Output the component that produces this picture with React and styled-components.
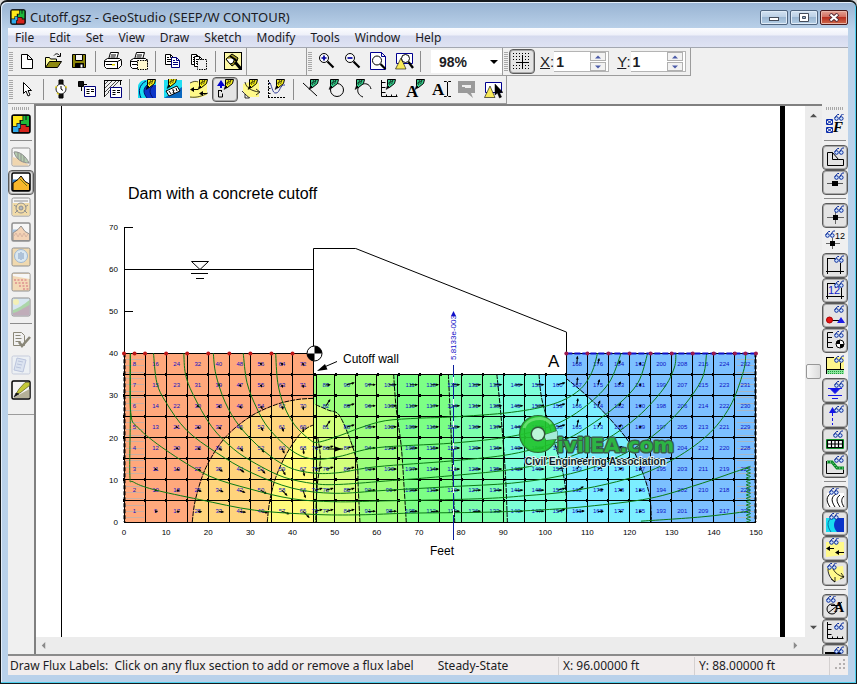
import React, { useState } from 'react';
import styled, { createGlobalStyle, css } from 'styled-components';

const GlobalStyle = createGlobalStyle`
  * { box-sizing: border-box; }

  body {
    margin: 0;
    background: #d8d8d8;
    color: #1c1c24;
    font-family: 'Noto Sans', 'Open Sans', sans-serif;
    font-size: 12px;
  }

  button, input, select {
    font: inherit;
    color: inherit;
    margin: 0;
    padding: 0;
    border: 0;
    border-radius: 0;
    outline: 0;
  }
`;

/* ---------- window ---------- */

const Window = styled.div`
  display: flex;
  flex-direction: column;
  height: 100vh;
  padding: 0 8px 8px 7px;
  background: linear-gradient(#98b3d2, #bbd2ea 28px, #b9d1ea);
  border: 1px solid #16191c;
  border-top-width: 2px;
  border-radius: 7px 7px 0 0;
  box-shadow: inset -1px -1px 0 #4fd0ee, inset 1px 1px 0 #e4eefa;
`;

const TitleBar = styled.header`
  display: flex;
  align-items: center;
  gap: 4px;
  flex: 0 0 26px;
  padding: 4px 0 0 2px;
`;

const Title = styled.h1`
  flex: 1;
  margin: 0;
  font-size: 13px;
  font-weight: 400;
  white-space: nowrap;
`;

const Captions = styled.div`
  display: flex;
  gap: 2px;
`;

const CaptionButton = styled.button`
  display: flex;
  align-items: center;
  justify-content: center;
  width: 28px;
  height: 15px;
  border: 1px solid #50657f;
  border-radius: 2px;
  background: linear-gradient(#d3e2f1, #b9cee4 50%, #9bb6d1 50%, #b4cfe6);
  box-shadow: inset 0 0 0 1px #dfebf7;

  ${p => p.$close && css`
    border-color: #4a1a1c;
    background: linear-gradient(#e3a294, #d2695a 50%, #b83020 50%, #cf6a4c);
    box-shadow: inset 0 0 0 1px #e9b5a8;
  `}
`;

const Client = styled.div`
  display: flex;
  flex-direction: column;
  flex: 1;
  min-height: 0;
  background: #f0f0f0;
`;

const MenuBar = styled.nav`
  display: flex;
  flex: 0 0 20px;
  border-bottom: 1px solid #a3a7b0;
  background: linear-gradient(#fbfcfe, #eef0f9 7px, #d5daee 8px, #dfe3f3);
`;

const MenuItem = styled.button`
  margin-right: 1px;
  padding: 0 7px;
  background: none;
  font-size: 12px;
  line-height: 18px;
`;

/* ---------- tool bars ---------- */

const ToolRow = styled.div`
  display: flex;
  flex: 0 0 28px;
`;

const ToolBar = styled.div`
  display: flex;
  align-items: center;
  padding-right: ${p => p.$end || 0}px;
  border-right: 1px solid #9c9c9c;
  border-bottom: 1px solid #9c9c9c;
`;

const Blank = styled.div`
  flex: 0 0 60px;
  border-right: 1px solid #9c9c9c;
  border-bottom: 1px solid #9c9c9c;
`;

const Grip = styled.div`
  flex: none;
  width: 4px;
  height: 19px;
  margin: 0 1px;
  background: repeating-linear-gradient(#a8a8a8 0 1px, #f0f0f0 1px 2px);

  ${p => p.$across && css`
    width: 18px;
    height: 3px;
    margin: 2px 0;
    background: repeating-linear-gradient(90deg, #a8a8a8 0 1px, #f0f0f0 1px 2px);
  `}
`;

const Separator = styled.div`
  flex: none;
  width: 1px;
  height: 21px;
  margin: 0 4px 0 3px;
  background: #8c8c8c;

  ${p => p.$across && css`
    width: 22px;
    height: 1px;
    margin: 3px 0 4px;
  `}
`;

const ToolButton = styled.button`
  display: flex;
  align-items: flex-start;
  justify-content: center;
  flex: none;
  width: 26px;
  height: 25px;
  padding-top: 1px;
  background: none;
  border: 1px solid transparent;
  border-radius: 4px;
  opacity: ${p => (p.$dim ? 0.4 : 1)};

  ${p => p.$on && css`
    border-color: #5a5a5a;
    background: #e4e4e4;
    box-shadow: inset 0 0 0 1px #a9a9a9;
  `}
`;

const ZoomBox = styled.div`
  display: flex;
  align-items: center;
  width: 71px;
  height: 23px;
  margin-left: 6px;
  padding-right: 4px;
  background: #ffffff;
`;

const ZoomSelect = styled.select`
  flex: 1;
  height: 21px;
  padding-left: 8px;
  appearance: none;
  background: none;
  font: bold 14px 'Liberation Sans', Arial, sans-serif;
`;

const Coord = styled.div`
  display: flex;
  align-items: center;
  margin-left: 5px;
  margin-right: 3px;
  font: 15px 'Liberation Sans', Arial, sans-serif;
`;

const CoordBox = styled.div`
  display: flex;
  align-items: center;
  height: 21px;
  padding-right: 2px;
  background: #ffffff;
  border: 1px solid #b4b4b4;
  border-left: 0;

  input {
    width: 36px;
    padding-left: 2px;
    background: none;
    font: bold 14px 'Liberation Sans', Arial, sans-serif;
  }
`;

const Spinner = styled.div`
  display: flex;
  flex-direction: column;
  gap: 1px;

  button {
    display: flex;
    align-items: center;
    justify-content: center;
    width: 16px;
    height: 9px;
    background: #f2f2f2;
    border: 1px solid #b0b0b0;
  }
`;

/* ---------- work area ---------- */

const Work = styled.main`
  display: flex;
  flex: 1;
  min-height: 0;
`;

const SideBar = styled.aside`
  display: flex;
  flex-direction: column;
  align-items: center;
  flex: none;
  width: 26px;
  padding-top: 1px;
  overflow: hidden;
`;

const SideEnd = styled.div`
  width: 100%;
  height: 12px;
  border-bottom: 1px solid #9c9c9c;
`;

const Document = styled.section`
  display: flex;
  flex-direction: column;
  flex: 1;
  min-width: 0;
  border-left: 2px solid #808080;
  border-top: 2px solid #808080;
`;

const View = styled.div`
  display: flex;
  flex: 1;
  min-height: 0;
`;

const Sheet = styled.div`
  flex: 1;
  min-width: 0;
  background: #ffffff;

  svg {
    display: block;
    width: 100%;
    height: 100%;
  }
`;

const ScrollBar = styled.div`
  display: flex;
  flex-direction: ${p => (p.$vertical ? 'column' : 'row')};
  align-items: center;
  justify-content: space-between;
  flex: 0 0 17px;
  padding: ${p => (p.$vertical ? '4px 0' : '0 21px 0 2px')};
  background: #ececec;

  button {
    display: flex;
    padding: 2px;
    background: none;
  }
`;

const Thumb = styled.div`
  width: 15px;
  height: 15px;
  border: 1px solid #979797;
  border-radius: 2px;
  background: linear-gradient(90deg, #f8f8f8, #dcdcdc);
`;

const StatusBar = styled.footer`
  display: flex;
  align-items: center;
  flex: 0 0 21px;
  background: #f1eded;
  border-top: 2px solid #8b8b8b;
  font-size: 12px;
  white-space: pre;
`;

const StatusCell = styled.span`
  flex: ${p => (p.$width ? `0 0 ${p.$width}px` : 1)};
  padding-left: ${p => (p.$width ? 4 : 2)}px;
  border-left: ${p => (p.$width ? '1px solid #d4d0d0' : 0)};
  line-height: 18px;
`;

const Hint = styled.span`
  margin-right: 24px;
`;

/* ---------- icons ---------- */

const Svg = ({ children, size = 20 }) => (
  <svg width={size} height={size} viewBox="0 0 20 20" fill="none" stroke="#000" strokeWidth="1" aria-hidden="true">
    {children}
  </svg>
);

const Glasses = ({ x = 9, y = 0 }) => (
  <g transform={`translate(${x} ${y})`} stroke="#0a2c9c">
    <circle cx="2.500" cy="5.500" r="1.800" fill="#cfe4ff" />
    <circle cx="7.300" cy="5.500" r="1.800" fill="#cfe4ff" />
    <path d="M.8 4.800 3.500 1.500h1.500M5.700 4.500 8.300 1h1.700" />
  </g>
);

const Nib = ({ x = 9, y = 0, color = '#f4ee1c' }) => (
  <g transform={`translate(${x} ${y})`}>
    <path d="M1.500.500h8l-1 4-5 4-2-2z" fill={color} />
    <path d="M4.500 1l-1 5M7 1 5.500 5M2 4.500l5-3" strokeWidth=".6" />
    <path d="M0 10.500 3.500 8.500 1.500 6.500z" fill="#000" strokeWidth=".5" />
  </g>
);

const GREEN = '#35c98a';

const AppLogo = ({ size = 20 }) => (
  <Svg size={size}>
    <rect x="1" y="1" width="18" height="18" rx="2" fill="#111" strokeWidth="1.500" />
    <path d="M2 2h9.500v4h-3v3h-3v3h-3.500z" fill="#ffe81a" stroke="none" />
    <path d="M12.300 2h2.200v4h1v-4h2.500v10h-2.500v-2h-5.500v-3.200h2.300z" fill="#1db83a" stroke="none" />
    <path d="M6.300 9.800h2.900v4.200h-1.700v4h-5.500v-5.200h4.300z" fill="#2fa9e8" stroke="none" />
    <path d="M10 11h4.700v2h3.300v5h-9.600v-3.200h1.600z" fill="#d5241c" stroke="none" />
  </Svg>
);

const Sheets = ({ x, y, blue }) => (
  <g transform={`translate(${x} ${y})`} stroke={blue ? '#00007c' : '#000'}>
    <path d="M.5.5h5l3 3v7h-8z" fill="#fff" />
    <path d="M5.500.5v3h3M2 5.500h5M2 7.500h5M2 3.500h2" />
  </g>
);

const Printer = () => (
  <>
    <path d="M5.500 8.500 7.500 1.500h8l-2 7" fill="#fff" />
    <path d="M1.500 9.500 4.500 7.500h12l2 2v5l-3 3h-12l-2-2z" fill="#fff" />
    <path d="M1.500 10.500h13l4-2M14.500 10.500v7M3 13.500h8M8 4h5M7.500 6h5" />
    <path d="M9 13h3v1.500h-3z" fill="#dcd400" stroke="none" />
  </>
);

const Hill = ({ body = '#f7b72c', sky = '#fff', children }) => (
  <>
    <rect x="1" y="1" width="18" height="18" rx="1.500" fill={sky} strokeWidth="1.500" />
    <path d="M1.500 7.500h5v3h-5z" fill="#3b80c4" stroke="none" />
    <path d="M2 11 7 7.500l3-3.500 4 5.500 4.500 2.500v6.500h-16.500z" fill={body} />
    {children}
  </>
);

const Axes = () => <path d="M2.500 1v16.500h16M2.500 3.500h4M2.500 8.500h4M2.500 13.500h4M7.500 17.500v-2M12.500 17.500v-2M17.500 17.500v-2" />;

const Lens = ({ x = 7, y = 6 }) => (
  <>
    <circle cx={x} cy={y} r="4.500" fill="#fff" fillOpacity=".7" />
    <path d={`M${x + 3.5} ${y + 3.5}l6 6`} strokeWidth="2.200" />
  </>
);

const Letter = ({ x, y, size = 17, children, color = '#000', family = 'Liberation Serif', weight = 'bold' }) => (
  <text x={x} y={y} fontSize={size} fontWeight={weight} fontFamily={`${family}, serif`} fill={color} stroke="none">
    {children}
  </text>
);

const icons = {
  new: <path d="M4.500 3.500h6l5 5v9h-11zM10.500 3.500v5h5" fill="#fff" />,
  open: (
    <>
      <path d="M2.500 16.500v-10h4l1 1.500h6v3" fill="#ffffa0" />
      <path d="M2.500 16.500 6.500 10.500h12l-4 6z" fill="#8f8a10" />
      <path d="M11 4.500c2-2.500 4-2 5.500 0M17.500 2v3.500h-3.500" />
    </>
  ),
  save: (
    <>
      <path d="M3.500 3.500h13v13h-13z" fill="#8a8408" />
      <path d="M6.500 3.500h7v6h-7z" fill="#f4f4f4" />
      <path d="M6.500 12.500h8v4h-8z" fill="#000" />
      <path d="M11.500 13.500h2v3h-2z" fill="#fff" stroke="none" />
    </>
  ),
  print: <Printer />,
  printArea: (
    <>
      <Printer />
      <path d="M8.500 9.500h10v9h-10z" fill="#fff9d0" strokeDasharray="1.500 1" />
    </>
  ),
  copy: (
    <>
      <Sheets x={2} y={3} />
      <Sheets x={8} y={6} blue />
    </>
  ),
  copyArea: (
    <>
      <Sheets x={2} y={3} />
      <Sheets x={5} y={5} />
      <path d="M8.500 8.500h9v10h-9z" fill="#f0f0f0" strokeDasharray="1.500 1" />
    </>
  ),
  brush: (
    <>
      <rect x="1.500" y="1.500" width="17" height="17" fill="#fdf8a4" />
      <path d="M3 8 9 3l6 4-2 5-4 3z" fill="#a89c20" />
      <path d="M3 8l4 5 3-1 2-5" fill="#fff" />
      <path d="M12 11l6 7" strokeWidth="3" />
      <path d="M7 5l7 5" strokeWidth="2" />
    </>
  ),
  zoomIn: (
    <>
      <Lens x={8} y={7} />
      <path d="M5.500 7h5M8 4.500v5" stroke="#0000a0" strokeWidth="1.700" />
    </>
  ),
  zoomOut: (
    <>
      <Lens x={8} y={7} />
      <path d="M5.500 7h5" stroke="#0000a0" strokeWidth="1.700" />
    </>
  ),
  zoomPage: (
    <>
      <path d="M2.500 1.500h11l4 4v13h-15zM13.500 1.500v4h4" fill="#fff" stroke="#000090" />
      <circle cx="9" cy="9.500" r="4.500" fill="#fff" />
      <path d="M12.500 13l5 5" strokeWidth="2.200" />
    </>
  ),
  zoomObjects: (
    <>
      <path d="M2.500 2.500h16v10h-16z" fill="#fff" stroke="#000090" />
      <path d="M1.500 18 7 7l5 11z" fill="#f8ea58" strokeWidth=".6" />
      <circle cx="11.500" cy="7.500" r="4" fill="#fff" fillOpacity=".8" />
      <path d="M14.500 11l4.500 6" strokeWidth="2.400" />
    </>
  ),
  grid: (
    <>
      <path d="M1 2.500h18M1 5.500h18M1 8.500h18M1 14.500h18M1 17.500h18" strokeDasharray="1 2" />
      <path d="M10.500 4v13M4 11.500h13" />
    </>
  ),
  pointer: <path d="M6.500 3.500v11l2.500-2.500 2 5 2-1-2-4.500h3.500z" fill="#fff" />,
  watch: (
    <>
      <path d="M8 1h4v4H8zM8 15h4v4H8z" fill="#111" />
      <circle cx="10" cy="10" r="5" fill="#fff" stroke="#222" />
      <path d="M5.500 7l-1 2M14.500 7l1 2M6 14l2 1.500" stroke="#e0d020" strokeWidth="1.500" />
      <path d="M10 7v3l2 1.500" />
    </>
  ),
  keyNode: (
    <>
      <path d="M1.500 2.500h5v5h-5z" fill="#111" />
      <path d="M4.500 8v4M7 5.500h3" />
      <path d="M7.500 7.500h11v10h-11z" fill="#fff" stroke="#00007c" />
      <path d="M9.500 10.500h3M14 10.500h3M9.500 12.500h3M14 12.500h3M9.500 14.500h3" />
    </>
  ),
  keyRegion: (
    <>
      <path d="M1 1.500h18M1.500 1v17M17.500 1v5" />
      <path d="M2 9 9 2M2 13 13 2M5 13 16 2M2 17 6 13M2 5l3-3" strokeWidth=".7" />
      <path d="M7.500 8.500h11v10h-11z" fill="#fff" stroke="#00007c" />
      <path d="M9.500 11.500h3M14 11.500h3M9.500 13.500h3M14 13.500h3M9.500 15.500h3" />
    </>
  ),
  contours: (
    <>
      <path d="M1 19V7c1-4 4-6 8-6h10v18z" fill="#18dcf0" stroke="none" />
      <path d="M10 19c-4-5-4-9 0-13h9v13z" fill="#0b35c8" stroke="none" />
      <path d="M4 19C1 12 2 6 9 2M10 19c-4-5-4-9 0-13M16 19c-4-5-4-9 0-12" stroke="#02106c" />
      <Nib />
    </>
  ),
  contourLabels: (
    <>
      <path d="M1 1h18v18H1z" fill="#20dff2" stroke="none" />
      <path d="M1 19 19 8v11z" fill="#0b68c0" stroke="none" />
      <path d="M3 12 14 7l3 5-11 5z" fill="#fff" />
      <path d="M6 12l2 3M9 11h2l-1 3h2M13 9l1 3" />
      <Nib x={4} y={-1} />
    </>
  ),
  vectors: (
    <>
      <path d="M1 4 5 2h13v14l-8 3H1z" fill="#fff98a" stroke="none" />
      <path d="M1 4c4-2 6-2 8-1M1 18c7 1 12-1 18-4" strokeWidth=".7" />
      <path d="M3 10.500h6M11 14.500h7" />
      <path d="M1 10.500 5 8v5zM10 14.500l4-2.500v5z" fill="#000" stroke="none" />
      <Nib />
    </>
  ),
  fluxLabel: (
    <>
      <path d="M6 9V4" stroke="#0000d0" strokeWidth="2" />
      <path d="M2 7 6 1l4 6z" fill="#0000d0" stroke="none" />
      <path d="M3.500 11v7h4v-3.500M6.500 11v2M4 11.500h3" />
      <Nib />
    </>
  ),
  paths: (
    <>
      <path d="M2 5 12 2l6 2v14H7L2 12z" fill="#fff98a" stroke="none" />
      <path d="M1 12c4 4 6 6 8 7M4 3c1 6 7 9 14 10M15 10l4 3-4 3M4 15v4h4" strokeWidth=".8" />
      <Nib x={7} />
    </>
  ),
  graph: (
    <>
      <path d="M1.500 1v17M1 18.500h18M1.500 4.500h2M1.500 9.500h2M1.500 14.500h2" strokeDasharray="2 1" />
      <path d="M2 3c3 2 3 12 7 11 4 0 4-9 9-8" stroke="#303a94" />
      <Nib x={8} />
    </>
  ),
  sketchLine: (
    <>
      <path d="M2 4l14 13" />
      <Nib x={8} color={GREEN} />
    </>
  ),
  sketchCircle: (
    <>
      <circle cx="10" cy="11" r="6.500" />
      <Nib x={2} color={GREEN} />
    </>
  ),
  sketchArc: (
    <>
      <path d="M10 18c-8-3-6-12 0-13 4-1 7 1 8 5" />
      <Nib x={2} color={GREEN} />
    </>
  ),
  sketchAxes: (
    <>
      <Axes />
      <Nib x={7} color={GREEN} />
    </>
  ),
  sketchText: (
    <>
      <Letter x={1} y={18}>A</Letter>
      <Nib x={10} color={GREEN} />
    </>
  ),
  text: (
    <>
      <Letter x={1} y={16}>A</Letter>
      <path d="M13 2.500h2.500l1 1 1-1h2.500M16.500 3v14M13 17.500h2.500l1-1 1 1h2.500" />
    </>
  ),
  balloon: (
    <g stroke="none">
      <path d="M1 2h17v12h-4l2 5-6-5H1z" fill="#9a9a9a" />
      <path d="M5 6h9v2H5zM8 8h6v1H8z" fill="#eee" />
    </g>
  ),
  pickObjects: (
    <>
      <path d="M2.500 3.500h16v10h-16z" fill="#fff" stroke="#000090" />
      <path d="M1.500 18.500 7 7l5 11.500z" fill="#f8ea58" strokeWidth=".6" />
      <path d="M12 5v11l2.500-2 2 5 2-1-2-4.500h3.500z" fill="#000" strokeWidth=".5" />
    </>
  ),
  slope: (
    <>
      <rect x="1" y="1" width="18" height="18" rx="1.500" fill="#fff" />
      <path d="M1.500 10 9 12l9.500 6.500h-17z" fill="#f0b050" stroke="none" />
      <path d="M3 5c5-1 12 4 15 11-6 0-13-3-15-11z" fill="#5f9a50" />
      <path d="M7 5v7M10 7v7M13 9v6" />
    </>
  ),
  seep: (
    <Hill>
      <path d="M9 7l7 7" stroke="#7a7a10" />
    </Hill>
  ),
  sigma: (
    <>
      <rect x="1" y="1" width="18" height="18" rx="1.500" fill="#fff" />
      <path d="M1.500 6h17v12.500h-17z" fill="#f4bc3c" stroke="none" />
      <circle cx="10" cy="11" r="5" />
      <circle cx="10" cy="11" r="2" fill="#567" />
      <path d="M3 4h14M4 16l3-3M16 16l-3-3M3 8l3 2M17 8l-3 2" />
    </>
  ),
  quake: (
    <Hill body="#f8a860">
      <path d="M3 14l2-3 2 4 2-4 2 4 2-4 2 4 2-3" stroke="#b86030" />
    </Hill>
  ),
  temp: (
    <>
      <rect x="1" y="1" width="18" height="18" rx="1.500" fill="#f0b850" />
      <circle cx="10" cy="9" r="6.500" fill="#b8dcf4" stroke="#2a62a0" />
      <path d="M10 5v8M8 6v6M12 6v6" stroke="#2a62a0" strokeWidth="1.500" />
    </>
  ),
  tran: (
    <>
      <rect x="1" y="1" width="18" height="18" rx="1.500" fill="#f8b860" />
      <path d="M2 2h16.500v5L2 4z" fill="#fff" stroke="none" />
      <path d="M3 8h13M4 11h14M8 14h11M12 17h7" stroke="#d03018" strokeWidth="2" strokeDasharray="2 1.500" />
    </>
  ),
  vadose: (
    <>
      <rect x="1" y="1" width="18" height="18" rx="1.500" fill="#b4d8f0" />
      <circle cx="5" cy="5" r="3" fill="#f8f060" stroke="none" />
      <path d="M2 14C8 12 12 10 18.500 4v14.500H2z" fill="#7a4a68" stroke="none" />
      <path d="M2 13C8 11 12 8 18.500 3v5C12 11 8 15 2 16z" fill="#48b040" stroke="none" />
    </>
  ),
  verify: (
    <g stroke="#8a8778">
      <path d="M2.500 2.500h8l3 3v10h-11z" />
      <path d="M4.500 5.500h5M4.500 8.500h6M4.500 11.500h5" />
      <path d="M8 12l3 4 8-9" strokeWidth="2.600" />
    </g>
  ),
  solve: (
    <>
      <rect x="1" y="1" width="18" height="18" rx="1.500" fill="#e8f0fc" stroke="#8a98c0" />
      <path d="M6 3l9 2-3 12-9-2z" fill="#bcd0f0" stroke="#6c84c0" />
      <path d="M7 6l5 1M6 9l5 1M5 12l5 1" stroke="#6c84c0" />
    </>
  ),
  contourMode: (
    <>
      <rect x="1" y="1" width="18" height="18" rx="1.500" fill="#f4f4f4" strokeWidth="1.500" />
      <path d="M2 18h16.500V9z" fill="#b4b098" stroke="none" />
      <path d="M5 14 8 9l6-6.500h4.500v3L9 13z" fill="#c4c838" stroke="#5a5a18" strokeWidth=".7" />
      <path d="M3 17l2-4L8 14z" fill="#111" strokeWidth=".5" />
    </>
  ),
  preferences: (
    <>
      <path d="M1.500 5.500h6v5h-6zM1.500 13.500h6v5h-6zM2 6l5 4M7 6l-5 4M2 14l5 4M7 14l-5 4" stroke="#0a2cac" />
      <text x="8" y="18" fontSize="15" fontStyle="italic" fontWeight="bold" fontFamily="Liberation Serif, serif" fill="#000" stroke="none">F</text>
      <Glasses y={-1} />
    </>
  ),
  regions: (
    <>
      <path d="M7.500 5.500H2.500v13h16v-6h-5zM7.500 5.500v7h6" />
      <Glasses />
    </>
  ),
  points: (
    <>
      <path d="M2 11.500h16" stroke="#555" />
      <path d="M7 9h6v5H7z" fill="#000" stroke="none" />
      <Glasses />
    </>
  ),
  nodes: (
    <>
      <path d="M2 12.500h17M10.500 4v15" stroke="#666" />
      <path d="M8 10h5v5H8z" fill="#000" stroke="none" />
      <Glasses />
    </>
  ),
  nodeNumbers: (
    <>
      <path d="M1 13.500h14M7.500 8v11" stroke="#666" />
      <path d="M5 11h5v5H5z" fill="#000" stroke="none" />
      <Letter x={10} y={9} size={9} family="Liberation Sans" weight="normal">12</Letter>
      <Glasses x={0} />
    </>
  ),
  elements: (
    <>
      <path d="M2.500 3v16M15.500 8v11M2 3.500h8M1 16.500h18" />
      <Glasses />
    </>
  ),
  elementNumbers: (
    <>
      <path d="M2.500 3v16M16.500 8v11M2 3.500h8M1 16.500h18" />
      <Letter x={3} y={14} size={11} color="#1020c8" family="Liberation Sans" weight="normal">12</Letter>
      <Glasses />
    </>
  ),
  boundary: (
    <>
      <path d="M4 15.500h12" />
      <circle cx="4.500" cy="15" r="3" fill="#e81414" stroke="#a00" />
      <path d="M12 18 16 12l4 6z" fill="#1c1ce4" stroke="none" />
      <Glasses />
    </>
  ),
  axesHistory: (
    <>
      <path d="M8 2.500H2.500v15H8M2.500 7.500H7M2.500 12.500H7" />
      <circle cx="15" cy="14" r="4" fill="#fff" />
      <path d="M15 14v-4a4 4 0 0 0-4 4zM15 14v4a4 4 0 0 0 4-4z" fill="#000" stroke="none" />
      <Glasses />
    </>
  ),
  surface: (
    <>
      <path d="M1 2h18v12H1z" fill="#fdf68c" stroke="none" />
      <path d="M1 14h18v5H1z" fill="#8ce69c" stroke="none" />
      <path d="M1 16.500h18M1 18.500h18" stroke="#1c9c3c" strokeDasharray="1 1" />
      <path d="M1.500 2v17M15.500 8v6M1 2.500h8M1 14.500h18" />
      <Glasses />
    </>
  ),
  waterTable: (
    <>
      <path d="M5 8.500h10l-5 5z" fill="#1414e8" stroke="#1414e8" />
      <path d="M3 15.500h14M7 18.500h6M3 8.500h14" stroke="#1414e8" />
      <Glasses />
    </>
  ),
  flux: (
    <>
      <path d="M4 8 7.500 2 11 8z" fill="#1414e8" stroke="none" />
      <path d="M7.500 8v12" stroke="#1414e8" strokeDasharray="3 2" />
      <Glasses />
    </>
  ),
  mesh: (
    <>
      <path d="M1.500 9.500h17v9h-17z" fill="#fff" stroke="#109028" />
      <path d="M2.500 10.500h15v7h-15zM3 14h14M6.500 10.500v7M10 10.500v7M13.500 10.500v7" strokeWidth="1.200" />
      <Glasses x={8} />
    </>
  ),
  profile: (
    <>
      <path d="M1.500 6v12.500h17v-4" />
      <path d="M2 7h5l5 6h7" stroke="#0a8a28" strokeWidth="3" />
      <path d="M2 7h5l5 6h7" stroke="#b8f8c0" strokeDasharray="1 2" />
      <Glasses />
    </>
  ),
  viewLines: (
    <>
      <path d="M2 5h17v14H2z" fill="#fff" stroke="none" />
      <path d="M5 19C1 13 1 9 6 5M10 19C6 13 6 9 11 6M15 19c-4-6-4-9 0-12M19 19c-3-5-3-8 0-11" />
      <Glasses x={4} y={-1} />
    </>
  ),
  viewContours: (
    <>
      <path d="M1 5h18v14H1z" fill="#18dcf0" stroke="none" />
      <path d="M12 19c-4-5-4-9 0-14h7v14z" fill="#0b35c8" stroke="none" />
      <path d="M6 19C2 13 2 9 6 5" stroke="#0a70a0" />
      <Glasses x={4} y={-1} />
    </>
  ),
  viewVectors: (
    <>
      <path d="M1 4h18v13L1 19z" fill="#fff98a" stroke="none" />
      <path d="M3 10.500h6M12 14.500h7" />
      <path d="M1 10.500 5 8v5zM10 14.500l4-2.500v5z" fill="#000" stroke="none" />
      <Glasses x={4} y={-1} />
    </>
  ),
  viewPaths: (
    <>
      <path d="M1 5 18 3l1 12-10 4z" fill="#fff98a" stroke="none" />
      <path d="M3 6c0 6 3 10 7 13M8 6c2 4 6 7 11 8M6 16l4 3v-5M15 16l4-2-3-4" strokeWidth=".8" />
      <Glasses x={2} y={-1} />
    </>
  ),
  viewSketch: (
    <>
      <circle cx="7" cy="13" r="5" />
      <path d="M3 17 17 6M6 9.500h10" />
      <Letter x={9} y={16} size={14}>A</Letter>
      <Glasses x={1} y={-1} />
    </>
  ),
  viewAxes: (
    <>
      <Axes />
      <Glasses y={1} />
    </>
  ),
  viewPicture: (
    <>
      <path d="M1 7h14v10H1z" fill="#c8a838" strokeWidth="2" />
      <Glasses />
    </>
  ),
};

/* ---------- seepage section ---------- */

const SCALE_X = 4.213;
const SCALE_Y = 4.22;
const fx = ft => 88 + ft * SCALE_X;
const fy = ft => 416 - ft * SCALE_Y;
const snap = v => Math.floor(v) + 0.5;

// Catmull-Rom through points given in feet
const curve = pts => {
  const p = pts.map(([x, y]) => [fx(x), fy(y)]);
  let d = `M${p[0].join(' ')}`;
  for (let i = 0; i < p.length - 1; i++) {
    const a = p[i - 1] || p[i];
    const b = p[i];
    const c = p[i + 1];
    const e = p[i + 2] || c;
    d += `C${b[0] + (c[0] - a[0]) / 6} ${b[1] + (c[1] - a[1]) / 6} ${c[0] - (e[0] - b[0]) / 6} ${c[1] - (e[1] - b[1]) / 6} ${c[0]} ${c[1]}`;
  }
  return d;
};

const poly = pts => pts.map(([x, y]) => `${fx(x)},${fy(y)}`).join(' ');

const heads = {
  left1: [[16.2, 0], [17, 5.5], [19.5, 13], [24, 20], [30, 25], [36, 27.8], [41, 29], [45, 29.3]],
  left2: [[34, 0], [34.6, 5], [36, 10.5], [38.5, 16], [41.5, 20.5], [43.5, 22.3], [45, 23]],
  toe: [[46, 20], [46.6, 15], [45.8, 8], [45.5, 0]],
  mid1: [[45.5, 27.8], [48.5, 26.5], [51, 25.4], [53.5, 20], [55.3, 14], [55.6, 8], [56, 0]],
  mid2: [[64, 35], [64.6, 27], [65.8, 18], [66.5, 8], [67, 0]],
  mid3: [[77, 35], [77.6, 22], [78, 12], [78.5, 0]],
  mid4: [[88.5, 35], [89.5, 25], [90.5, 12], [91, 0]],
  mid5: [[98.5, 35], [99.2, 29], [101.5, 21], [104, 12.5], [105, 6], [105, 0]],
  right: [[105, 34], [110, 29.8], [115, 24.8], [120, 18.7], [123, 12], [124.8, 6], [125.2, 0]],
};

const bands = [
  { fill: '#ffa87c', pts: [[0, 0], [0, 40], [45, 40], [45, 0]] },
  { fill: '#ffd47c', pts: [...heads.left1, [45, 0]] },
  { fill: '#fffb7c', pts: [...heads.left2, [45, 0]] },
  { fill: '#9cff7c', pts: [[45, 0], [45, 35], [105, 35], [105, 0]] },
  { fill: '#d2ff7c', pts: [[45, 0], [45, 28], ...heads.mid1] },
  { fill: '#7cff86', pts: [...heads.mid2, [105, 0], [105, 35]] },
  { fill: '#7cffac', pts: [...heads.mid3, [105, 0], [105, 35]] },
  { fill: '#7cffd8', pts: [...heads.mid4, [105, 0], [105, 35]] },
  { fill: '#7cc0ff', pts: [[105, 0], [105, 40], [150, 40], [150, 0]] },
  { fill: '#7ceeff', pts: [...heads.mid5, [105, 0], ...[...heads.right].reverse(), [105, 35]] },
];

const streamlines = [
  [[1.5, 40], [1.5, 25], [1.4, 11], [2.2, 9.5], [7, 7.7], [18, 5.3], [31, 2.8], [45, 1.8], [56, 1.7], [68, 2.1], [85, 2.3], [98, 2.8], [110, 3.7], [124.8, 5.6], [136, 8.8], [145.4, 12], [148.2, 12.9]],
  [[1.5, 40], [1.6, 26], [3.4, 22.3], [10, 17], [20, 11], [30, 7.8], [40, 5.5], [50, 4.8], [62, 5], [84, 5.5], [95, 6.2], [106.6, 7.4], [120, 10.4], [129.6, 14.4], [138.3, 20.4], [143.8, 27.3], [147, 35.6], [147.6, 40]],
  [[7, 40], [7.8, 33], [10, 28.3], [14.8, 21.8], [22, 16.4], [30, 11.8], [40, 8], [50, 6.8], [62, 7.5], [78, 8.4], [92, 9.2], [103.5, 10.9], [113, 13.6], [123, 18.6], [131, 25.4], [137, 33.5], [138.3, 40]],
  [[14.2, 40], [14.6, 35], [16.4, 30.2], [20.8, 22.6], [26, 17.3], [31.5, 13.7], [38, 10.6], [45, 9.1], [51, 8.9], [62, 9.7], [78, 11], [93, 12.6], [105, 15.2], [114, 19.3], [122, 25], [128, 31.5], [130.6, 36.5], [131, 40]],
  [[21.2, 40], [21.8, 35], [24, 28.4], [27.5, 22.6], [33, 17], [39, 13], [45, 11.6], [51, 11.7], [60, 13.1], [78, 14.5], [92, 16.1], [104, 19.3], [110, 22.5], [117, 27.6], [122, 33], [124.3, 40]],
  [[28.3, 40], [29.2, 33], [31.5, 27], [34.5, 22], [40, 16.8], [45, 14.9], [51, 15.5], [60, 17.6], [78, 18.7], [92, 20.3], [102, 23], [109, 27], [115, 32.8], [118, 40]],
  [[36, 40], [36.5, 33], [38, 27.5], [40.5, 23], [44, 19.6], [46, 18.9], [51, 20.4], [56, 22.3], [62, 24], [70, 24.6], [78, 24.9], [92, 26], [102, 28], [108, 31.2], [111, 35.4], [112.4, 40]],
  [[122.7, 0.2], [137, 1.2], [148, 2.5]],
];

// element columns: left block, gap under the cutoff, base of the dam, right block
const columns = [];
for (let x = 0; x < 45; x += 5) columns.push({ x: x + 2.5, rows: 8 });
columns.push({ x: 45.3, rows: 4 });
for (let x = 45; x < 105; x += 5) columns.push({ x: x + 2.9, rows: 7 });
for (let x = 105; x < 150; x += 5) columns.push({ x: x + 2.5, rows: 8 });

const elements = [];
columns.forEach(({ x, rows }) => {
  for (let r = 0; r < rows; r++) elements.push({ id: elements.length + 1, x, y: r * 5 + 2.5 });
});

const velocity = ({ x, y }) => {
  if (x < 45) {
    const r = Math.hypot(45 - x, y);
    const len = Math.max(0.4, 9 - r / 5);
    return [((45 - x) / r) * len, (-y / r) * len];
  }
  if (x > 105) {
    const lift = (y * y) / 40;
    const r = Math.hypot(x - 105, lift);
    const len = Math.max(0.3, 8 - (x - 105) / 2.5);
    return [((x - 105) / r) * len, (lift / r) * len];
  }
  if (x < 50 && y > 20) return [4, y > 30 ? 0 : 6];
  return [7, x < 55 || x > 100 ? 2 : 0.2];
};

const lines = [];
for (let x = 0; x <= 150; x += 5) lines.push([x, 0, x, x > 45 && x < 105 ? 35 : 40]);
for (let y = 0; y <= 35; y += 5) lines.push([0, y, 150, y]);
lines.push([0, 40, 45, 40], [105, 40, 150, 40], [45.6, 0, 45.6, 35]);

const Vector = ({ el }) => {
  const [dx, dy] = velocity(el);
  const len = Math.hypot(dx, dy);
  if (len < 0.8) return null;
  const angle = (Math.atan2(-dy, dx) * 180) / Math.PI;
  return (
    <g transform={`translate(${fx(el.x)} ${fy(el.y)}) rotate(${angle})`}>
      <path d={`M0 0H${len}`} stroke="#000" />
      <path d={`M${len + 1} 0l-3-1.300v2.600z`} />
    </g>
  );
};

const Mesh = () => (
  <g>
    {bands.map(b => <polygon key={b.fill} points={poly(b.pts)} fill={b.fill} />)}
    <g stroke="#b7b3b0" opacity=".7" shapeRendering="crispEdges">
      {Array.from({ length: 26 }, (_, i) => (
        <path key={i} d={`M${fx(0.5)} ${fy(i * 1.5 + 1)}H${fx(4.8)}M${fx(145.5)} ${fy(i * 1.5 + 1)}H${fx(149.5)}`} />
      ))}
    </g>
    <g stroke="#000" shapeRendering="crispEdges">
      {lines.map(([x1, y1, x2, y2]) => (
        <line key={`${x1}-${y1}-${x2}`} x1={snap(fx(x1))} y1={snap(fy(y1))} x2={snap(fx(x2))} y2={snap(fy(y2))} />
      ))}
    </g>
    <g shapeRendering="crispEdges">
      {elements.filter(e => e.x !== 45.3).map(e => (
        <rect key={e.id} x={Math.floor(fx(e.x - 2.5)) - 1} y={Math.floor(fy(e.y + 2.5)) - 1} width="2" height="3" />
      ))}
    </g>
    <g stroke="#000" fill="none" strokeDasharray="5 1">
      {Object.entries(heads).map(([name, pts]) => <path key={name} d={curve(pts)} />)}
    </g>
    <g fontSize="6" fontFamily="Liberation Sans, Arial, sans-serif" fill="#0c10c4" textAnchor="middle">
      {elements.map(e => <text key={e.id} x={fx(e.x)} y={fy(e.y) + 2}>{e.id}</text>)}
    </g>
    {elements.map(e => <Vector key={e.id} el={e} />)}
    <g stroke="#0a7a14" fill="none">
      {streamlines.map((pts, i) => <path key={i} d={curve(pts)} />)}
      <path d={curve(Array.from({ length: 34 }, (_, i) => [148.2 + (i % 2 ? 0.5 : -0.5), i * 0.4]))} />
    </g>
  </g>
);

const Boundaries = () => (
  <g>
    <path d={`M${snap(fx(0))} ${fy(40)}V${fy(0)}M${snap(fx(150))} ${fy(40)}V${fy(0)}`} stroke="#000" strokeWidth="2" strokeDasharray="4 2" />
    <path d={`M${fx(105)} ${snap(fy(40))}H${fx(150)}`} stroke="#1010c8" strokeWidth="2" strokeDasharray="6 2" />
    {[0, 2.5, 5, 10, 15, 20, 25, 30, 35, 40].map(x => <circle key={x} cx={fx(x)} cy={snap(fy(40))} r="2" fill="#c01818" />)}
    {[105, 110, 115, 120, 125, 130, 135, 140, 145, 147.5, 150].map(x => <circle key={x} cx={fx(x)} cy={snap(fy(40))} r="2" fill="#9c1c50" />)}
  </g>
);

const Watermark = () => (
  <g fontWeight="bold" strokeLinejoin="round" paintOrder="stroke">
    <circle cx="502" cy="328" r="18" fill="#22c42e" stroke="#2f6f3c" strokeWidth="2" fillOpacity=".92" />
    <path d="M488 322c2-9 20-14 27-4" fill="none" stroke="#7ee884" strokeWidth="3" opacity=".7" />
    <path d="M508 329l13-4v8l-11 1z" fill="#a4ecd8" stroke="#2f6f3c" />
    <circle cx="502" cy="328" r="6" fill="#bdf6d8" stroke="#33573c" strokeWidth="3" />
    <text x="521" y="346" fontSize="20" fontFamily="DejaVu Sans, sans-serif" fill="#2cb544" stroke="#38604a" strokeWidth="3">ivilEA.com</text>
    <text x="489" y="359" fontSize="10" fontFamily="Liberation Sans, Arial, sans-serif" fill="#0e1c28" stroke="#dff4f0" strokeWidth="2">Civil Engineering Association</text>
  </g>
);

const Drawing = () => (
  <svg role="img" aria-label="Dam with a concrete cutoff" fontFamily="Liberation Sans, Arial, sans-serif">
    <rect x="25" y="0" width="1" height="100%" />
    <rect x="744" y="0" width="5" height="100%" />
    <text x="92" y="93" fontSize="16">Dam with a concrete cutoff</text>

    <Mesh />

    <g stroke="#000" fill="none" shapeRendering="crispEdges">
      <path d={`M88.500 ${fy(40)}V121.500M88 121.500h9M88 205.500h9`} />
      <path d={`M88 163.500H${fx(45)}`} />
    </g>
    <path d={`M${snap(fx(45))} ${fy(40)}V142.500H${fx(55)}L${snap(fx(105))} ${fy(45)}V${fy(40)}`} stroke="#000" fill="none" />
    <path d="M155.500 155.500h17l-8.500 8zM155 167.500h17M160 172.500h8" stroke="#000" fill="#fff" />

    <Boundaries />

    <g>
      <circle cx="278.500" cy="247.500" r="7.500" fill="#fff" stroke="#000" />
      <path d="M278.500 247.500v-7.500a7.500 7.500 0 0 1 7.500 7.500zM278.500 247.500v7.500a7.500 7.500 0 0 1-7.500-7.500z" />
    </g>
    <path d="M301 255.500 286 262" stroke="#000" />
    <path d="M281 265l8-7 2.500 5.500z" />
    <path d="M292 343h15" stroke="#000" />
    <path d="M306 343l-7-2.500v5z" />

    <path d="M417.500 259V434" stroke="#0a1c9c" />
    <path d="M417.500 271V416" stroke="#f4f4ff" strokeDasharray="6 16" />
    <path d="M417.500 205l2.500 5h-5z" fill="#1010c8" />
    <text transform="translate(420 254) rotate(-90)" fontSize="8" fill="#1010c8">5.8133e-003</text>

    <text x="307" y="257" fontSize="12">Cutoff wall</text>
    <text x="512" y="261" fontSize="17">A</text>
    <text x="394" y="449" fontSize="12">Feet</text>

    <g fontSize="8">
      {[0, 10, 20, 30, 40, 50, 60, 70].map(v => (
        <text key={v} x="82" y={fy(v) + 3} textAnchor="end">{v}</text>
      ))}
      {Array.from({ length: 16 }, (_, i) => i * 10).map(v => (
        <text key={v} x={fx(v)} y="429" textAnchor="middle">{v}</text>
      ))}
    </g>

    <Watermark />
  </svg>
);

/* ---------- app ---------- */

const menus = ['File', 'Edit', 'Set', 'View', 'Draw', 'Sketch', 'Modify', 'Tools', 'Window', 'Help'];

const fileTools = ['new', 'open', 'save', '|', 'print', 'printArea', '|', 'copy', 'copyArea', '|', 'brush'];
const zoomTools = ['zoomIn', 'zoomOut', 'zoomPage', 'zoomObjects', '|'];
const modeTools = [
  'pointer', '|', 'watch', 'keyNode', 'keyRegion', '|',
  'contours', 'contourLabels', 'vectors', 'fluxLabel', 'paths', 'graph', '|',
  'sketchLine', 'sketchCircle', 'sketchArc', 'sketchAxes', 'sketchText', 'text', 'balloon', 'pickObjects',
];
const analysisTools = ['logo', '|', 'slope', 'seep', 'sigma', 'quake', 'temp', 'tran', 'vadose', '|', 'verify', 'solve', 'contourMode'];
const viewTools = [
  'preferences', '|', 'regions', 'points', '|',
  'nodes', 'nodeNumbers', 'elements', 'elementNumbers', 'boundary', 'axesHistory', 'surface', 'waterTable', 'flux', 'mesh', 'profile', '|',
  'viewLines', 'viewContours', 'viewVectors', 'viewPaths', '|',
  'viewSketch', 'viewAxes', 'viewPicture',
];

const pressed = ['grid', 'fluxLabel', 'seep', ...viewTools.filter(n => !['preferences', 'nodeNumbers', 'surface'].includes(n))];
const disabled = ['slope', 'sigma', 'quake', 'temp', 'tran', 'vadose', 'solve'];

const Tools = ({ names, across }) =>
  names.map((name, i) =>
    name === '|' ? (
      <Separator key={i} $across={across} />
    ) : (
      <ToolButton key={name} aria-label={name} $on={pressed.includes(name)} $dim={disabled.includes(name)}>
        {name === 'logo' ? <AppLogo /> : <Svg>{icons[name]}</Svg>}
      </ToolButton>
    )
  );

const Arrow = ({ dir = 0, color = '#505050', size = 7 }) => (
  <svg width={size} height={size} viewBox="0 0 8 8" aria-hidden="true">
    <path d="M4 2l4 4H0z" fill={color} transform={`rotate(${dir} 4 4)`} />
  </svg>
);

const CoordField = ({ axis }) => {
  const [value, setValue] = useState(1);
  return (
    <Coord>
      <label htmlFor={`grid-${axis}`}><u>{axis}</u>:</label>
      <CoordBox>
        <input id={`grid-${axis}`} value={value} onChange={e => setValue(e.target.value)} />
        <Spinner>
          <button aria-label={`${axis} up`} onClick={() => setValue(Number(value) + 1)}><Arrow color="#4a5aa8" size={6} /></button>
          <button aria-label={`${axis} down`} onClick={() => setValue(Number(value) - 1)}><Arrow dir={180} color="#4a5aa8" size={6} /></button>
        </Spinner>
      </CoordBox>
    </Coord>
  );
};

const App = () => (
  <>
    <GlobalStyle />
    <Window>
      <TitleBar>
        <AppLogo size={16} />
        <Title>Cutoff.gsz - GeoStudio (SEEP/W CONTOUR)</Title>
        <Captions>
          <CaptionButton aria-label="Minimize">
            <svg width="12" height="9"><rect x="1.500" y="4.500" width="9" height="3" fill="#fff" stroke="#444c5a" /></svg>
          </CaptionButton>
          <CaptionButton aria-label="Maximize">
            <svg width="12" height="9"><path d="M1.500.5h9v8h-9zM4.500 3.500v2h3v-2z" fill="#fff" fillRule="evenodd" stroke="#444c5a" /></svg>
          </CaptionButton>
          <CaptionButton aria-label="Close" $close>
            <svg width="12" height="9">
              <path d="M2 1l8 7M10 1L2 8" stroke="#5a3038" strokeWidth="4" />
              <path d="M2.500 1.500l7 6M9.500 1.500l-7 6" stroke="#fff" strokeWidth="2" />
            </svg>
          </CaptionButton>
        </Captions>
      </TitleBar>

      <Client>
        <MenuBar>
          {menus.map(name => <MenuItem key={name}>{name}</MenuItem>)}
        </MenuBar>

        <ToolRow>
          <ToolBar>
            <Grip />
            <Tools names={fileTools} />
          </ToolBar>
          <Blank />
          <ToolBar>
            <Grip />
            <Tools names={zoomTools} />
            <ZoomBox>
              <ZoomSelect aria-label="Zoom" defaultValue="98%">
                <option>98%</option>
                <option>100%</option>
              </ZoomSelect>
              <Arrow dir={180} color="#000" size={8} />
            </ZoomBox>
          </ToolBar>
          <ToolBar $end={1}>
            <Grip />
            <Tools names={['grid']} />
            <CoordField axis="X" />
            <CoordField axis="Y" />
          </ToolBar>
        </ToolRow>
        <ToolRow>
          <ToolBar>
            <Grip />
            <Tools names={modeTools} />
          </ToolBar>
        </ToolRow>

        <Work>
          <SideBar>
            <Grip $across />
            <Tools names={analysisTools} across />
            <SideEnd />
          </SideBar>
          <Document>
            <View>
              <Sheet><Drawing /></Sheet>
              <ScrollBar $vertical>
                <button aria-label="Scroll up"><Arrow /></button>
                <Thumb />
                <button aria-label="Scroll down"><Arrow dir={180} /></button>
              </ScrollBar>
            </View>
            <ScrollBar>
              <button aria-label="Scroll left"><Arrow dir={270} color="#8a8a8a" /></button>
              <button aria-label="Scroll right"><Arrow dir={90} color="#8a8a8a" /></button>
            </ScrollBar>
          </Document>
          <SideBar>
            <Grip $across />
            <Tools names={viewTools} across />
          </SideBar>
        </Work>

        <StatusBar>
          <StatusCell>
            <Hint>Draw Flux Labels:  Click on any flux section to add or remove a flux label</Hint>
            Steady-State
          </StatusCell>
          <StatusCell $width={136}>X: 96.00000 ft</StatusCell>
          <StatusCell $width={135}>Y: 88.00000 ft</StatusCell>
          <StatusCell $width={19}>
            <svg width="12" height="12" fill="#b4b0b0" aria-hidden="true">
              <path d="M9 1h2v2H9zM9 5h2v2H9zM5 5h2v2H5zM9 9h2v2H9zM5 9h2v2H5zM1 9h2v2H1z" />
            </svg>
          </StatusCell>
        </StatusBar>
      </Client>
    </Window>
  </>
);

export default App;
